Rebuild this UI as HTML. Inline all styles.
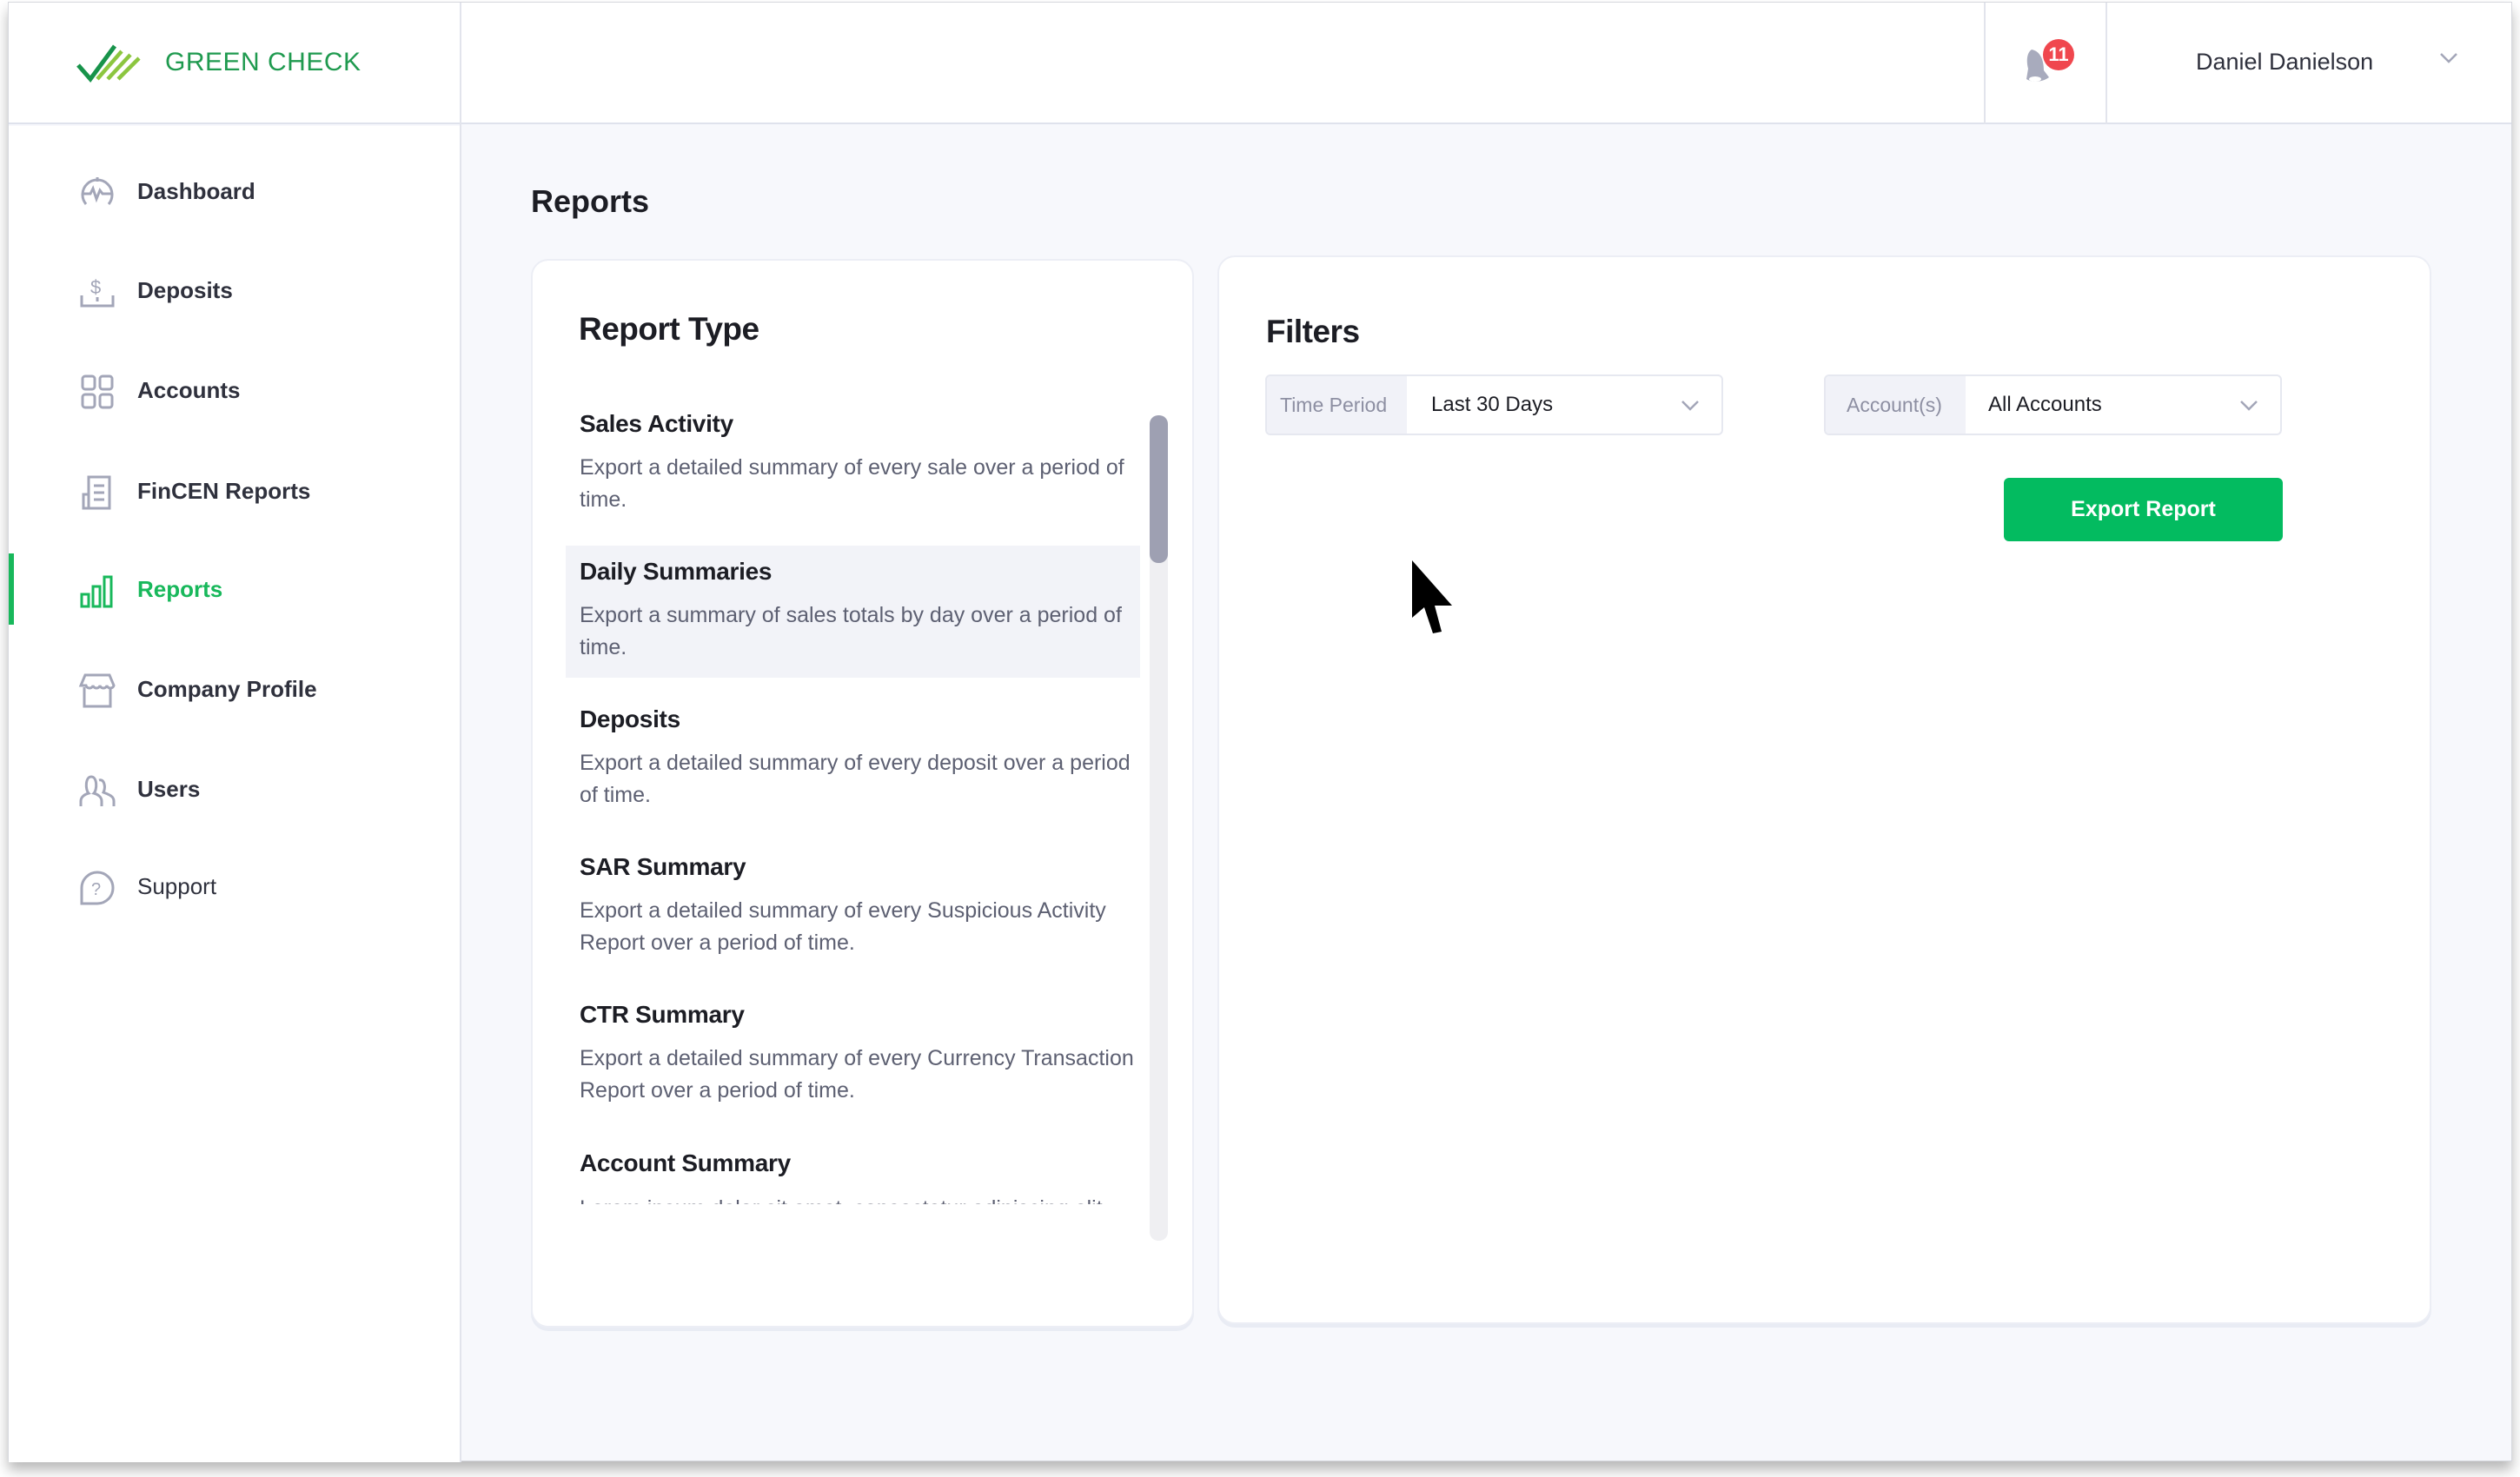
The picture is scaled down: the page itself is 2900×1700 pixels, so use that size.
<!DOCTYPE html>
<html><head><meta charset="utf-8"><style>
*{margin:0;padding:0;box-sizing:border-box}
html,body{width:2900px;height:1700px;background:#fff;overflow:hidden;font-family:"Liberation Sans",sans-serif}
.a{position:absolute}
#app{position:absolute;left:9px;top:2px;width:2882px;height:1680px;background:#f7f8fc;border:1px solid #d6d8de;box-shadow:0 10px 14px rgba(0,0,0,.28)}
.nav{position:absolute;left:148px;font-size:26px;font-weight:bold;color:#2f313d;line-height:40px}
.ic{position:absolute;left:80px;width:44px;height:44px}
.card{position:absolute;background:#fff;border:2px solid #eceef5;border-radius:20px;box-shadow:0 4px 0 #e9ecf4}
.t{position:absolute;left:666px;font-size:28px;font-weight:bold;color:#1c1d24;line-height:40px;letter-spacing:-0.3px}
.d{position:absolute;left:666px;font-size:25px;color:#5d6072;line-height:37px;white-space:nowrap}
.sel{position:absolute;height:70px;border:2px solid #e6e8f0;border-radius:6px;background:#fff;overflow:hidden}
.sel .l{position:absolute;left:0;top:0;bottom:0;background:#f1f2f8;color:#8d8fa2;font-size:23px;line-height:66px;padding-left:15px}
.sel .v{position:absolute;top:0;font-size:24px;color:#1c1d24;line-height:66px}
</style></head><body>
<div id="app">
 <div class="a" style="left:0;top:0;width:2880px;height:140px;background:#fff;border-bottom:2px solid #dfe2ec"></div>
 <div class="a" style="left:519px;top:0;width:2px;height:1680px;background:#e2e4ec"></div>
 <div class="a" style="left:2273px;top:0;width:2px;height:140px;background:#e2e4ec"></div>
 <div class="a" style="left:2413px;top:0;width:2px;height:140px;background:#e2e4ec"></div>
 <div class="a" style="left:0;top:142px;width:519px;height:1538px;background:#fff"></div>
 <svg class="a" style="left:78px;top:46px" width="90" height="46" viewBox="0 0 90 46">
  <path d="M2 26 L16 42 L44 4" stroke="#17934a" stroke-width="5" fill="none"/>
  <path d="M24 42 L52 10" stroke="#8cc63f" stroke-width="4.5"/>
  <path d="M36 42 L62 14" stroke="#8cc63f" stroke-width="4.5"/>
  <path d="M48 42 L72 18" stroke="#8cc63f" stroke-width="4.5"/>
 </svg>
 <div class="a" style="left:180px;top:49px;font-size:30px;color:#1f9a4f;line-height:40px;letter-spacing:0.5px">GREEN CHECK</div>
 <svg class="a" style="left:2318px;top:48px" width="40" height="48" viewBox="0 0 40 48">
  <path d="M10 6 C4 10 4 20 6 28 L4 40 C10 44 22 44 30 38 L24 30 C24 18 20 8 10 6Z" fill="#a8abbd"/>
  <ellipse cx="14" cy="40" rx="7" ry="3" fill="#fff"/>
 </svg>
 <div class="a" style="left:2341px;top:42px;width:36px;height:36px;border-radius:50%;background:#f0474e;color:#fff;font-size:22px;font-weight:bold;text-align:center;line-height:36px">11</div>
 <div class="a" style="left:2517px;top:50px;font-size:27px;color:#2f313d;line-height:36px">Daniel Danielson</div>
 <svg class="a" style="left:2798px;top:58px" width="20" height="12" viewBox="0 0 20 12"><path d="M1 1 L10 10 L19 1" stroke="#a3a6b8" stroke-width="2.5" fill="none"/></svg>

 <div class="a" style="left:0;top:634px;width:6px;height:82px;background:#18b85b"></div>
 <svg class="ic" style="top:196px" viewBox="0 0 44 44" fill="none" stroke="#a3a6b8" stroke-width="3"><path d="M9 36 A17 17 0 1 1 35 36"/><path d="M5 24 H14 L17 18 L21 30 L25 20 L28 24 H39"/><path d="M22 5 V10"/></svg>
 <div class="nav" style="top:197px">Dashboard</div>
 <svg class="ic" style="top:311px" viewBox="0 0 44 44" fill="none" stroke="#a3a6b8" stroke-width="3"><path d="M4 26 V38 H40 V26"/><text x="14" y="24" font-size="22" fill="#a3a6b8" stroke="none" font-family="Liberation Sans">$</text><path d="M22 28 V33"/></svg>
 <div class="nav" style="top:311px">Deposits</div>
 <svg class="ic" style="top:426px" viewBox="0 0 44 44" fill="none" stroke="#a3a6b8" stroke-width="3"><rect x="5" y="4" width="14" height="15" rx="3"/><rect x="25" y="4" width="14" height="15" rx="3"/><rect x="5" y="25" width="14" height="15" rx="3"/><rect x="25" y="25" width="14" height="15" rx="3"/></svg>
 <div class="nav" style="top:426px">Accounts</div>
 <svg class="ic" style="top:542px" viewBox="0 0 44 44" fill="none" stroke="#a3a6b8" stroke-width="3"><path d="M12 4 H36 V40 H6 V24 H12 Z"/><path d="M12 24 V40"/><path d="M18 14 H30 M18 22 H30 M18 30 H30"/></svg>
 <div class="nav" style="top:542px">FinCEN Reports</div>
 <svg class="ic" style="top:655px" viewBox="0 0 44 44" fill="none" stroke="#18b85b" stroke-width="3"><rect x="4" y="26" width="8" height="14"/><rect x="17" y="17" width="8" height="23"/><rect x="30" y="6" width="8" height="34"/></svg>
 <div class="nav" style="top:655px;color:#18b85b">Reports</div>
 <svg class="ic" style="top:770px" viewBox="0 0 44 44" fill="none" stroke="#a3a6b8" stroke-width="3"><path d="M8 4 H36 L41 16 C40 20 34 20 33 16 C32 20 26 20 25 16 C24 20 18 20 17 16 C16 20 10 20 9 16 L3 16 Z"/><path d="M7 18 V40 H37 V18"/></svg>
 <div class="nav" style="top:770px">Company Profile</div>
 <svg class="ic" style="top:885px" viewBox="0 0 44 44" fill="none" stroke="#a3a6b8" stroke-width="3"><path d="M3 40 V34 C3 29 8 26 12 25 C8 21 8 6 15 6 C22 6 22 21 18 25 C22 26 27 29 27 34 V40"/><path d="M24 10 C30 8 32 18 29 24 C34 26 41 28 41 34 V40"/></svg>
 <div class="nav" style="top:885px">Users</div>
 <svg class="ic" style="top:997px" viewBox="0 0 44 44" fill="none" stroke="#a3a6b8" stroke-width="3"><path d="M4 40 V22 A18 18 0 1 1 22 40 Z"/><text x="15" y="30" font-size="20" fill="#a3a6b8" stroke="none" font-family="Liberation Sans">?</text></svg>
 <div class="nav" style="top:997px;font-weight:normal">Support</div>

 <div class="a" style="left:601px;top:207px;font-size:36px;font-weight:bold;color:#1c1d24;line-height:44px">Reports</div>

 <div class="card" style="left:601px;top:295px;width:763px;height:1230px"></div>
 <div class="a" style="left:656px;top:354px;font-size:37px;font-weight:bold;color:#1c1d24;line-height:44px;letter-spacing:-0.5px">Report Type</div>
 <div class="a" style="left:641px;top:625px;width:661px;height:152px;background:#f2f3f8"></div>
 <div class="a" style="left:1313px;top:475px;width:21px;height:950px;background:#efeff2;border-radius:10px"></div>
 <div class="a" style="left:1313px;top:475px;width:21px;height:170px;background:#9ea0b2;border-radius:10px"></div>
 <div class="a" style="left:0;top:0;width:1300px;height:1383px;overflow:hidden">
  <div class="t" style="left:657px;top:465px">Sales Activity</div>
  <div class="d" style="left:657px;top:517px">Export a detailed summary of every sale over a period of<br>time.</div>
  <div class="t" style="left:657px;top:635px">Daily Summaries</div>
  <div class="d" style="left:657px;top:687px">Export a summary of sales totals by day over a period of<br>time.</div>
  <div class="t" style="left:657px;top:805px">Deposits</div>
  <div class="d" style="left:657px;top:857px">Export a detailed summary of every deposit over a period<br>of time.</div>
  <div class="t" style="left:657px;top:975px">SAR Summary</div>
  <div class="d" style="left:657px;top:1027px">Export a detailed summary of every Suspicious Activity<br>Report over a period of time.</div>
  <div class="t" style="left:657px;top:1145px">CTR Summary</div>
  <div class="d" style="left:657px;top:1197px">Export a detailed summary of every Currency Transaction<br>Report over a period of time.</div>
  <div class="t" style="left:657px;top:1316px">Account Summary</div>
  <div class="d" style="left:657px;top:1370px">Lorem ipsum dolor sit amet, consectetur adipiscing elit</div>
 </div>

 <div class="card" style="left:1391px;top:291px;width:1397px;height:1230px"></div>
 <div class="a" style="left:1447px;top:357px;font-size:37px;font-weight:bold;color:#1c1d24;line-height:44px;letter-spacing:-0.5px">Filters</div>
 <div class="sel" style="left:1446px;top:428px;width:527px"><div class="l" style="width:161px">Time Period</div><div class="v" style="left:189px">Last 30 Days</div>
  <svg class="a" style="left:477px;top:28px" width="20" height="12" viewBox="0 0 20 12"><path d="M1 1 L10 10 L19 1" stroke="#a3a6b8" stroke-width="2.5" fill="none"/></svg></div>
 <div class="sel" style="left:2089px;top:428px;width:527px"><div class="l" style="width:161px;padding-left:24px">Account(s)</div><div class="v" style="left:187px">All Accounts</div>
  <svg class="a" style="left:477px;top:28px" width="20" height="12" viewBox="0 0 20 12"><path d="M1 1 L10 10 L19 1" stroke="#a3a6b8" stroke-width="2.5" fill="none"/></svg></div>
 <div class="a" style="left:2296px;top:547px;width:321px;height:73px;background:#03bb60;border-radius:6px;color:#fff;font-size:25px;font-weight:bold;text-align:center;line-height:73px">Export Report</div>

 <svg class="a" style="left:1613px;top:640px" width="56" height="90" viewBox="0 0 56 90"><path d="M2 2 L2 68 L16 56 L26 86 L36 84 L28 54 L48 54 Z" fill="#000"/></svg>
</div>
</body></html>
